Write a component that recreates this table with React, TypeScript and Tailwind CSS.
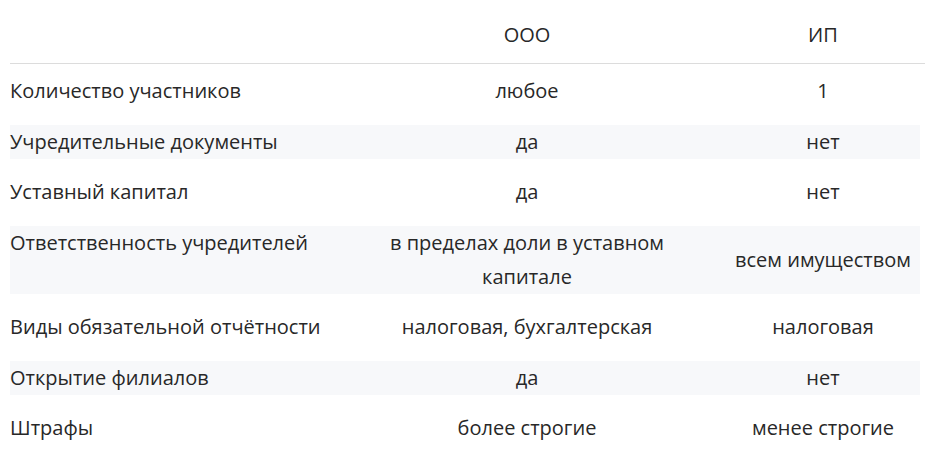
import React from 'react';

const ROWS: [string, string, string][] = [
    ['Количество участников', 'любое', '1'],
    ['Учредительные документы', 'да', 'нет'],
    ['Уставный капитал', 'да', 'нет'],
    ['Ответственность учредителей', 'в пределах доли в уставном капитале', 'всем имуществом'],
    ['Виды обязательной отчётности', 'налоговая, бухгалтерская', 'налоговая'],
    ['Открытие филиалов', 'да', 'нет'],
    ['Штрафы', 'более строгие', 'менее строгие'],
];

const App: React.FC = () => {
    return (
        <div className="w-[926px] h-[465px] bg-white text-[#282828] text-[20px] leading-[34px] font-['Open_Sans',sans-serif] pl-[10px] pt-[18px]">
            <div className="w-[915px] border-b border-[#dcdcdc] pb-[11px] grid grid-cols-[370px_294px_1fr]">
                <div />
                <div className="text-center">ООО</div>
                <div className="pl-[52px] pr-[5px] text-center">ИП</div>
            </div>
            <div className="w-[910px] pt-[10px] flex flex-col gap-y-[16.5px]">
                {ROWS.map((row, i) => (
                    <div
                        key={row[0]}
                        className={`grid grid-cols-[370px_294px_1fr] items-center ${i % 2 === 1 ? 'bg-[#f7f8fa]' : ''}`}
                    >
                        <div className="self-start">{row[0]}</div>
                        <div className="text-center">{row[1]}</div>
                        <div className="pl-[52px] text-center">{row[2]}</div>
                    </div>
                ))}
            </div>
        </div>
    );
};

export default App;
